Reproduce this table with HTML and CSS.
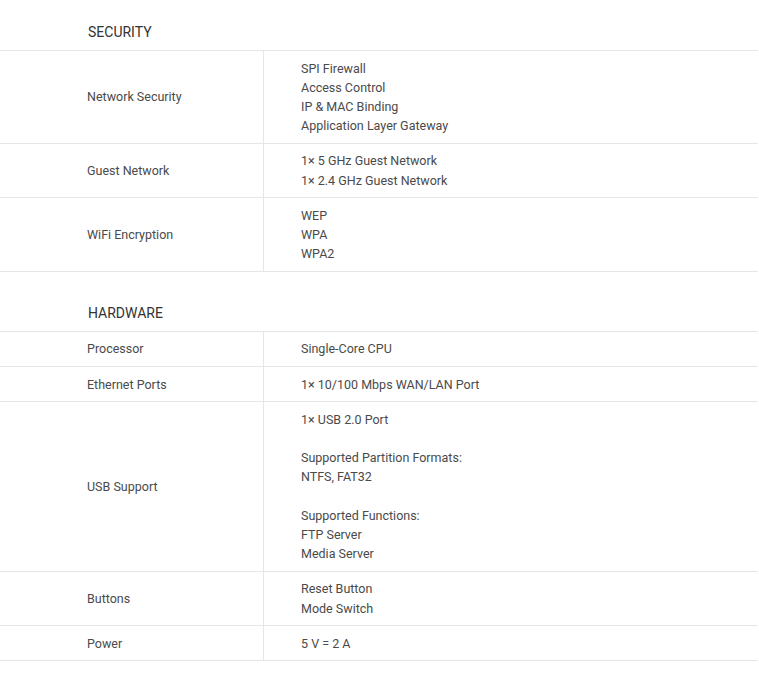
FILE: index.html
```html
<!DOCTYPE html>
<html>
<head>
<meta charset="utf-8">
<link rel="stylesheet" href="styles.css">
</head>
<body>
<div class="specs">
  <section class="section">
    <h2 class="section-title">SECURITY</h2>
    <div class="row">
      <div class="label">Network Security</div>
      <div class="value">SPI Firewall<br>Access Control<br>IP &amp; MAC Binding<br>Application Layer Gateway</div>
    </div>
    <div class="row">
      <div class="label">Guest Network</div>
      <div class="value">1× 5 GHz Guest Network<br>1× 2.4 GHz Guest Network</div>
    </div>
    <div class="row">
      <div class="label">WiFi Encryption</div>
      <div class="value">WEP<br>WPA<br>WPA2</div>
    </div>
  </section>
  <section class="section">
    <h2 class="section-title">HARDWARE</h2>
    <div class="row">
      <div class="label">Processor</div>
      <div class="value">Single-Core CPU</div>
    </div>
    <div class="row">
      <div class="label">Ethernet Ports</div>
      <div class="value">1× 10/100 Mbps WAN/LAN Port</div>
    </div>
    <div class="row">
      <div class="label">USB Support</div>
      <div class="value">1× USB 2.0 Port<br><br>Supported Partition Formats:<br>NTFS, FAT32<br><br>Supported Functions:<br>FTP Server<br>Media Server</div>
    </div>
    <div class="row">
      <div class="label">Buttons</div>
      <div class="value">Reset Button<br>Mode Switch</div>
    </div>
    <div class="row">
      <div class="label">Power</div>
      <div class="value">5 V = 2 A</div>
    </div>
  </section>
</div>
</body>
</html>
```
FILE: styles.css
```css
html, body {
  margin: 0;
  padding: 0;
  background: #fff;
}
body {
  font-family: Roboto, "Noto Sans", sans-serif;
  color: #4a4a4a;
}
.specs {
  width: 758px;
}
.section + .section {
  margin-top: 9px;
}
.section-title {
  margin: 0;
  padding: 22px 0 8px 88px;
  font-size: 14px;
  line-height: 20px;
  font-weight: 400;
  color: #333;
  border-bottom: 1px solid #e6e6ea;
}
.row {
  display: grid;
  grid-template-columns: 264px 1fr;
  border-bottom: 1px solid #e6e6ea;
  font-size: 12.5px;
  line-height: 19.2px;
}
.label {
  display: flex;
  align-items: center;
  padding-left: 87px;
  border-right: 1px solid #e6e6ea;
}
.value {
  padding: 7.5px 0 7.5px 37px;
}
```
